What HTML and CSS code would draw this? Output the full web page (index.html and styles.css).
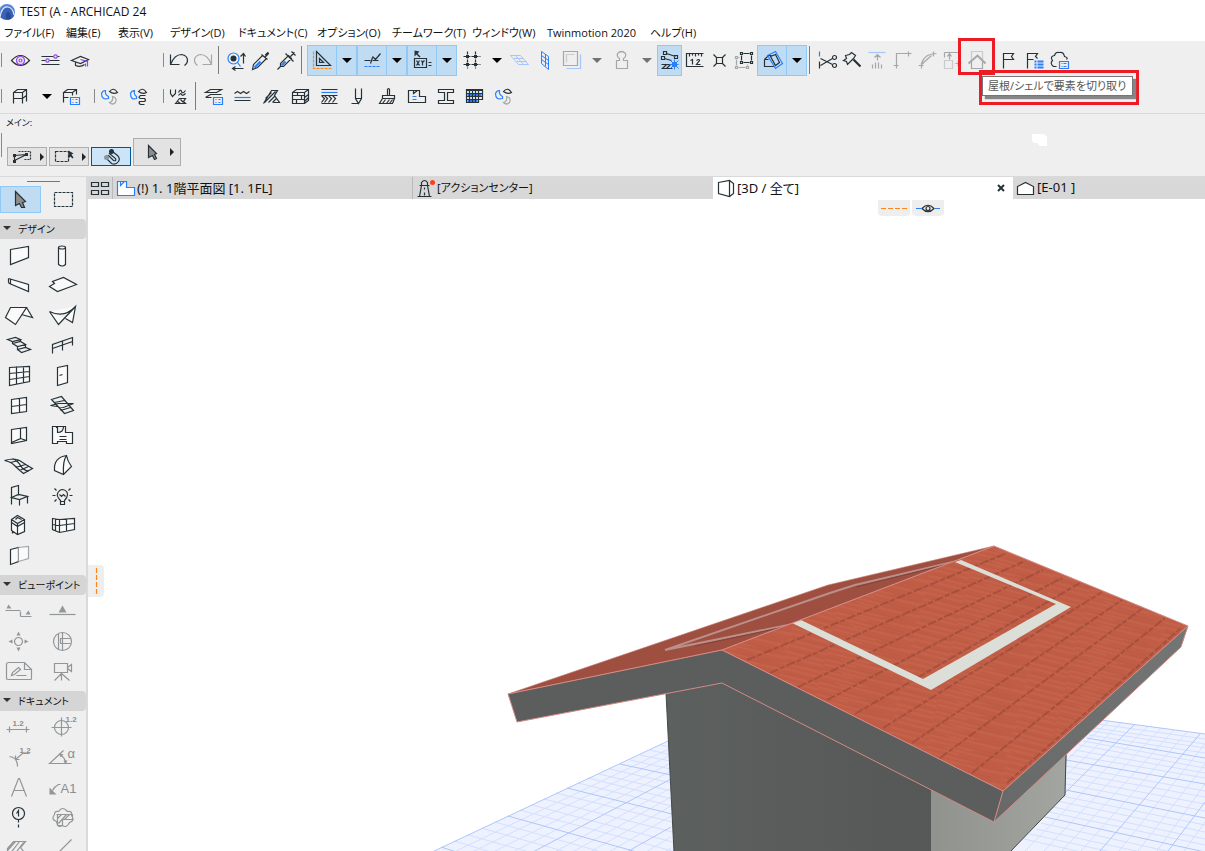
FILE: index.html
```html
<!DOCTYPE html>
<html lang="ja">
<head>
<meta charset="utf-8">
<title>TEST (A - ARCHICAD 24</title>
<link rel="stylesheet" href="styles.css">
</head>
<body>
<div class="app">
<header class="titlebar">
<svg class="logo" viewBox="0 0 16 16"><circle cx="7" cy="8" r="8" fill="#5b86d6"/><path d="M0 13Q1 3 8 3Q14 4 14 12Q11 16 7 16Q3 16 0 13z" fill="#3a62b8"/><path d="M0 13Q2 2 8 3Q13 4 14 11" fill="none" stroke="#dfe8fa" stroke-width="1.2"/><path d="M6 15Q5 8 8 8Q11 8 11 15z" fill="#284a98"/></svg>
<h1>TEST (A - ARCHICAD 24</h1>
</header>
<nav class="menubar">
<button>ファイル(F)</button><button>編集(E)</button><button>表示(V)</button><button>デザイン(D)</button><button>ドキュメント(C)</button><button>オプション(O)</button><button>チームワーク(T)</button><button>ウィンドウ(W)</button><button>Twinmotion 2020</button><button>ヘルプ(H)</button>
</nav>

<div class="toolbars">
<div class="toolbar">
<i class="grip first"></i>
<button class="w30" aria-label="表示"><svg viewBox="-11.5 -12.5 24 24"><path d="M-9 0Q0-10 9 0Q0 10-9 0z"/><g class="p"><circle r="4"/><circle r="1.5"/></g></svg></button>
<button class="w30" aria-label="調整"><svg viewBox="-11.5 -12.5 24 24"><path d="M-9-4H3M7-4H9M-9 0H-5M-1 0H9M-9 4H9"/><g class="p"><circle cx="5" cy="-4" r="1.7"/><circle cx="-3" cy="0" r="1.7"/></g></svg></button>
<button class="w30" aria-label="学習"><svg viewBox="-11.5 -12.5 24 24"><path d="M-9 0L0-4 8-1 0 3zM-5 2V5Q0 7 4 4"/><path class="p" d="M0-1L7 1V6M5 3V6"/></svg></button>
<i class="grip far"></i>
<button class="w25" aria-label="元に戻す"><svg viewBox="-11.5 -12.5 24 24"><path d="M-8-6V4H1M-8 4Q-4-6 3-6Q9-5 9 0Q9 3 6 5"/></svg></button>
<button class="w25" aria-label="やり直し"><svg class="g" viewBox="-11.5 -12.5 24 24"><path d="M8-6V4H-1M8 4Q4-6-3-6Q-9-5-9 0Q-9 3-6 5"/></svg></button>
<i class="rule"></i>
<button class="w25" aria-label="検索と選択"><svg viewBox="-11.5 -12.5 24 24"><circle class="b" cx="-3" cy="-2" r="5.5"/><path class="b" d="M1 2L4 6"/><circle class="f" cx="-3" cy="-2" r="3"/><path d="M7 3V-6M4-4L7-7 9-4M7 8H-3M-1 6L-4 8-1 10"/></svg></button>
<button class="w25" aria-label="スポイト"><svg viewBox="-11.5 -12.5 24 24"><path class="b thick" d="M-7 7L-1 1"/><path d="M-9 9L-8 4 1-5 5-2-4 7zM0-6L6-1M3-3L7-7"/><path class="thick" d="M4-5L7-8"/></svg></button>
<button class="w25" aria-label="注入"><svg viewBox="-11.5 -12.5 24 24"><path class="b thick" d="M-5 5L-1 1"/><path d="M-9 9L-6 6-6 3 2-5 5-2-3 6H-6M-1-7L7 1M4-4L8-8M5-9L9-5"/></svg></button>
<i class="rule"></i>
<span class="split"><button class="on w30" aria-label="ガイド線"><svg viewBox="-11.5 -12.5 24 24"><path class="o dash" d="M-8-9V8H10"/><path d="M-5-9V5H9zM-2-2V2H2z"/></svg></button><button class="on w20" aria-label="ガイド線メニュー"><b class="tri"></b></button></span>
<span class="split"><button class="on w30" aria-label="スナップガイド"><svg viewBox="-11.5 -12.5 24 24"><path class="b dash" d="M-7 6H9"/><path d="M-7 0H-1M-1 3L1-3M1 0H7M1-4L4-1 9-7"/></svg></button><button class="on w20" aria-label="スナップガイドメニュー"><b class="tri"></b></button></span>
<span class="split"><button class="on w30" aria-label="座標"><svg viewBox="-11.5 -12.5 24 24"><path class="f" d="M-7-10L-2-9-4-7-1-4-2-3-5-6-7-4z"/><path d="M-7-2H5V7H-7zM7 2H10M7 5H10M-5 0L-2 5M-2 0L-5 5M0 0L1 2 3 0M1 2V5"/></svg></button><button class="on w20" aria-label="座標メニュー"><b class="tri"></b></button></span>
<button class="w30" aria-label="グリッド"><svg viewBox="-11.5 -12.5 24 24"><path stroke-dasharray="3 1" d="M-8-4H9M-8 4H9M-4-9V8M4-9V8"/><path class="f" d="M-5.5-5.5h3v3h-3zM2.5-5.5h3v3h-3zM-5.5 2.5h3v3h-3zM2.5 2.5h3v3h-3z"/></svg></button>
<button class="w20" aria-label="グリッドメニュー"><b class="tri"></b></button>
<button class="w25" aria-label="編集平面"><svg class="lb thin" viewBox="-11.5 -12.5 24 24"><path d="M-9-5H1L9 4H-1zM-4-5L4 4M-6-2H4M-3 1H7"/></svg></button>
<button class="w25" aria-label="垂直平面"><svg class="b thin" viewBox="-11.5 -12.5 24 24"><path d="M-3-9L4-4V9L-3 3zM1-6V6M-3-5L4 0M-3-1L4 4"/></svg></button>
<button class="w30" aria-label="レイヤー"><svg viewBox="-11.5 -12.5 24 24"><path class="g" d="M-8-9H6V5H-8z"/><path class="g faint" d="M-5 2V-6H3"/><path class="lb" d="M9-6V8H-5"/></svg></button>
<button class="w20" aria-label="レイヤーメニュー"><b class="tri dim"></b></button>
<button class="w30" aria-label="スタンプ"><svg class="g" viewBox="-11.5 -12.5 24 24"><path d="M-5 8V0H-2V-2Q-5-4-4-7Q0-11 4-7Q5-4 2-2V0H6V8z"/></svg></button>
<button class="w20" aria-label="スタンプメニュー"><b class="tri dim"></b></button>
<button class="w25 on" aria-label="測定"><svg viewBox="-11.5 -12.5 24 24"><path d="M-3-7L6-4M-5-2L2 0M-6-9h3v3h-3zM5-5h3v3H5zM-8-4h3v3h-3zM-8 4H0M-8 8H3M-7 8L-3 4M-3 8L1 4"/><path class="b thin" d="M5-1v10M0 4h9M1 0l8 8M9 0L1 8"/><path fill="#2a7fff" stroke="none" d="M2.500 1.500h5v5h-5z"/></svg></button>
<button class="w25" aria-label="ルーラー"><svg viewBox="-11.5 -12.5 24 24"><path d="M9-7H-8V6H9M-5-7V-4M-2-7V-5M1-7V-4M4-7V-5M7-7V-4M-4 0L-2-1V4M2 0Q5-2 5 0L2 4H6"/></svg></button>
<button class="w25" aria-label="交点"><svg viewBox="-11.5 -12.5 24 24"><path d="M-6-6L-3-3M6-6L3-3M-6 6L-3 3M6 6L3 3M-3-3H3V3H-3z"/></svg></button>
<button class="w25" aria-label="グループ"><svg viewBox="-11.5 -12.5 24 24"><path class="g" d="M-8-1V5M-6 7H1M3 5V4M-5-3H-6M-9-4h2v2h-2zM-9 6h2v2h-2zM2 6h2v2H2z"/><path d="M-3-5V0M7-5V0M-1-7H5M-1 2H5M-4-8h2v2h-2zM6-8h2v2H6zM-4 1h2v2h-2zM6 1h2v2H6z"/></svg></button>
<span class="split"><button class="on w30" aria-label="平面に沿う"><svg viewBox="-11.5 -12.5 24 24"><path d="M-7-1L-3-5H0M-7-1V6H3M-7-1H-3"/><path class="b" d="M-4-5L4-9 11 3 4 8z"/><path d="M-1-4L4-6 8 2 4 5z"/></svg></button><button class="on w20" aria-label="平面メニュー"><b class="tri"></b></button></span>
<i class="rule"></i>
<button class="w25" aria-label="分割"><svg viewBox="-11.5 -12.5 24 24"><path class="b" d="M-8-9V-4"/><path d="M-8 1V8M-7-2L5 4M-7 5L5-2"/><circle cx="7" cy="-3" r="2"/><circle cx="7" cy="5" r="2"/></svg></button>
<button class="w25" aria-label="調整"><svg viewBox="-11.5 -12.5 24 24"><path d="M-7-5L-3-6-1-8 3-5 1-2-1 0-5 4 -6 1-9 0-6-2z"/><path class="thick" d="M1-1L8 6"/></svg></button>
<button class="w25" aria-label="高さ調整"><svg class="g" viewBox="-11.5 -12.5 24 24"><path class="lb" d="M-9-8H8"/><path d="M0 0V-6M-3-3L0-6 3-3M-5 4V8M-2 2V8M1 2V8M4 4V8"/></svg></button>
<button class="w25" aria-label="コーナー"><svg class="g" viewBox="-11.5 -12.5 24 24"><path d="M-6 8V-7H9M6-9V-4M-9 5H-4"/></svg></button>
<button class="w25" aria-label="フィレット"><svg class="g" viewBox="-11.5 -12.5 24 24"><path d="M-6 8V3Q-3-7 9-7M-6 4L4-5M6-9V-4M-9 5H-4"/></svg></button>
<button class="w25" aria-label="サイズ変更"><svg class="g" viewBox="-11.5 -12.5 24 24"><path d="M-8-8H6M-8-8V-3M-3-1V-6M-5-4L-3-7-1-4M3 3H8M5 1L8 3 5 5"/><path class="faint" d="M-8 0H0V8H-8z"/></svg></button>
<span class="marked"><button class="w25" aria-label="屋根/シェルで要素を切り取り" aria-describedby="tip"><svg class="g" viewBox="-11.5 -12.5 24 24"><path class="faint" d="M-6-1V-9H5V-1"/><path d="M-6 1V8H5V1"/><path stroke-width="2" d="M-9 3L0-5 8 3"/></svg></button><span class="mark-icon"></span><span class="mark-tip"><span class="tooltip" id="tip" role="tooltip">屋根/シェルで要素を切り取り</span></span></span>
<button class="w25 apart" aria-label="フラグ"><svg viewBox="-11.5 -12.5 24 24"><path d="M-4 8V-7H6L4-4 6-1H-4"/></svg></button>
<button class="w25" aria-label="フラグ一覧"><svg viewBox="-11.5 -12.5 24 24"><path d="M-7 8V-7H3L1-4 3-2M-7-1H-1"/><path class="b" stroke-width="2" d="M0 1H2M3 1H9M0 4H2M3 4H9M0 7H2M3 7H9"/></svg></button>
<button class="w25" aria-label="クラウド"><svg viewBox="-11.5 -12.5 24 24"><path d="M-3 6H-6Q-10 3-7 0Q-10-4-5-5Q-4-9 0-8Q4-9 5-4Q9-3 7-1"/><path class="b" d="M0 1H9V8H0zM2 3H3M4 3H7M2 6H3M4 6H7"/></svg></button>
</div>

<div class="toolbar second">
<i class="grip first"></i>
<button class="w29" aria-label="お気に入り"><svg viewBox="-11.5 -12.5 24 24"><path d="M-6 7V-4L-2-7H7V5M-6-4H3L7-7M3-4V7M-6 2H3L7-1"/></svg></button>
<button class="w25" aria-label="お気に入りメニュー"><b class="tri"></b></button>
<button class="w25" aria-label="お気に入り設定"><svg viewBox="-11.5 -12.5 24 24"><path d="M-8 6V-4L-4-7H5V-2M-8-4H1L5-7M1-4V-1M-8 1H-3"/><path class="b" d="M-1 1H8V8H-1zM1 3H2M4 3H6M1 6H2M4 6H6"/></svg></button>
<i class="grip near"></i>
<button class="w29" aria-label="ペンセット"><svg viewBox="-11.5 -12.5 24 24"><path class="b" d="M-1 2Q-8 4-8-3Q-7-6-4-6Q-5-2-1 0z"/><path d="M0-5Q4-10 8-4Q4-2 0-5z"/><path class="g" d="M3 0Q8 1 6 6Q3 9 0 6Q4 5 3 0z"/></svg></button>
<button class="w29" aria-label="属性"><svg viewBox="-11.5 -12.5 24 24"><path class="b" d="M-2 2Q-8 4-8-3Q-7-6-4-6Q-5-2-2 0z"/><path d="M0-5Q4-10 8-4Q4-2 0-5zM7-1H2Q-1 1 2 2H6Q8 4 6 5H1Q0 7 2 8H6"/></svg></button>
<i class="grip near2"></i>
<button class="w29" aria-label="モデル表示"><svg viewBox="-11.5 -12.5 24 24"><path d="M-8-7V-3L-6 0-3-3V-7M0-4Q2-8 3-5T7-6M0-1Q2-4 3-2T7-3M-3 7L1 2H7L5 5 7 7zM-1 5L2 7M2 3L5 6"/></svg></button>
<i class="rule"></i>
<button class="w29" aria-label="レイヤー設定"><svg viewBox="-11.5 -12.5 24 24"><path d="M-8-4L-3-7H8L3-4zM-8 1L-3-2H8M-8 1H-2"/><path class="b" d="M0 1H9V8H0zM2 3H3M5 3H7M2 6H3M5 6H7"/></svg></button>
<button class="w29" aria-label="線種"><svg viewBox="-11.5 -12.5 24 24"><path d="M-8-3L-5-5-2-3 1-5 4-3 7-5M-8 4H8"/><path class="b" d="M-8 1H8"/></svg></button>
<button class="w29" aria-label="塗りつぶし"><svg viewBox="-11.5 -12.5 24 24"><path d="M-8 7L0-6H6L3-1 8 6H2M-6 2L0-4M-7 6L4-5M-3 6L3 0M1 6L5 2"/></svg></button>
<button class="w29" aria-label="材質"><svg viewBox="-11.5 -12.5 24 24"><path d="M-8-4L-4-7H8V4L4 7H-8zM-8-4H4L8-7M4-4V7M-8-1H4M-8 3H4M-3-4V-1M1-1V3M-4 3V7M4 1L8-2M4 5L8 1"/></svg></button>
<button class="w29" aria-label="複合構造"><svg viewBox="-11.5 -12.5 24 24"><path d="M-8-7H8M-8-1H8M-8 7H8M-8-1L-5 2-8 6M-5-1L-2 2-5 6M-1-1L2 2-1 6M3-1L6 2 3 6"/><path class="b" d="M-8-4H8"/></svg></button>
<button class="w29" aria-label="ペン"><svg viewBox="-11.5 -12.5 24 24"><path d="M-3-8V2L0 7 3 2V-8M-3 2H3M-7 7H0"/></svg></button>
<button class="w29" aria-label="ブラシ"><svg viewBox="-11.5 -12.5 24 24"><path d="M-5-1H7V2H-5zM0-1V-7Q1-9 2-7V-1M-5 2L-8 7H5L7 2M-2 3L-5 7M2 3L-1 7M5 3L2 7"/></svg></button>
<button class="w29" aria-label="ゾーン"><svg viewBox="-11.5 -12.5 24 24"><path d="M-8-6H3V0H9V6H-8zM-3-6V-3L1-6"/><path class="b" d="M-4 0H0M-4 3H0"/></svg></button>
<button class="w29" aria-label="断面形状"><svg viewBox="-11.5 -12.5 24 24"><path d="M-7-7H8V-4H2V4H8V7H-7V4H-1V-4H-7z"/></svg></button>
<button class="w29" aria-label="一覧表"><svg viewBox="-11.5 -12.5 24 24"><path stroke="#2a7fff" stroke-width="3" d="M-7-2H7M-7 4H3"/><path d="M-8-6H8M-8-7H8V3H4V6H-8zM-8-3H8M-8 0H8M-8 3H4M-5-7V6M-2-7V6M1-7V6M4-7V3"/></svg></button>
<button class="w29" aria-label="表示スタイル"><svg viewBox="-11.5 -12.5 24 24"><path class="b" d="M-1 2Q-8 4-8-3Q-7-6-4-6Q-5-2-1 0z"/><path d="M0-5Q4-10 8-4Q4-2 0-5z"/><path class="g" d="M3 0Q8 1 6 6Q3 9 0 6Q4 5 3 0z"/></svg></button>
</div>
</div>

<section class="infobar">
<h2>メイン:</h2>
<div class="info-tools">
<i class="grip tall"></i>
<button class="box" aria-label="選択方法"><svg viewBox="-12.5 -9.5 24 18"><path stroke-dasharray="2 1" d="M-4-6H8V2H2"/><path d="M-8 4V-2L4-3-8 3"/><path class="f" d="M-9.500-3.500h3v3h-3zM-9.500 2.500h3v3h-3zM2.500-4.500h3v3h-3z"/></svg><b class="side"></b></button>
<button class="box" aria-label="矩形選択"><svg viewBox="-12.5 -9.5 24 18"><path stroke-dasharray="3 1" d="M-9-6H4V4H-9z"/><path class="f" d="M4-7L9-4 7-3 9 0 8 1 6-1 4 1z"/></svg><b class="side"></b></button>
<button class="box active" aria-label="磁石"><svg viewBox="-12.5 -9.5 24 18"><path d="M-6 0L0 6Q4 8 7 4Q9 1 6-2L1-6-2-4 4 1Q5 4 2 3L-3-2z"/><circle class="f" cx="0" cy="-6" r="2.500"/><circle cx="-5" cy="0" r="2.500" fill="#8d969c" stroke="none"/></svg></button>
<button class="box large" aria-label="矢印"><svg viewBox="-12.5 -12.5 24 24"><path fill="#8d8d8d" d="M-4-7L4 1 2 2 4 6 2 7 0 3-4 5z"/></svg><b class="side"></b></button>
</div>
<svg class="cloud" viewBox="0 0 15 12"><path fill="#fff" d="M0 0H12L15 3V12H8L5 9H2L0 7z"/></svg>
</section>

<div class="workspace">
<aside class="palette">
<i class="handle"></i>
<div class="select-tools">
<button class="on" aria-label="矢印"><svg viewBox="-11.5 -11.5 24 24"><path fill="#8d8d8d" d="M-5-8L5 2 2 3 4 8 1 8-1 4-5 6z"/></svg></button>
<button aria-label="矩形選択"><svg viewBox="-11.5 -11.5 24 24"><path stroke-dasharray="3 1" d="M-9-7H9V7H-9z"/></svg></button>
</div>
<h2>デザイン</h2>
<div class="tools">
<button aria-label="壁"><svg viewBox="-14.5 -14.5 30 30"><path fill="#fafafa" d="M-9-6L9-9V2L-9 9z"/></svg></button>
<button aria-label="柱"><svg viewBox="-14.5 -14.5 30 30"><path fill="#fafafa" d="M-4-8V9Q0 12 3 9V-8"/><ellipse cx="-.5" cy="-8" rx="3.500" ry="1.500"/></svg></button>
<button aria-label="梁"><svg viewBox="-14.5 -14.5 30 30"><path fill="#fafafa" d="M-11-7L9-1V6L-10-2-11-3M-11-7V-3M-9-6V-2M9-1V6"/></svg></button>
<button aria-label="スラブ"><svg viewBox="-14.5 -14.5 30 30"><path fill="#fafafa" d="M-13 1L-8-2-10-4 1-8 14-1-5 6z"/></svg></button>
<button aria-label="屋根"><svg viewBox="-14.5 -14.5 30 30"><path fill="#fafafa" d="M-14 2L-9-8H7L-4 9zM7-8L13 2 2-1"/></svg></button>
<button aria-label="シェル"><svg viewBox="-14.5 -14.5 30 30"><path fill="#fafafa" d="M-13-4Q2 3 13-9L10 7 3 3M-13-4L-4 9 13-9"/></svg></button>
<button aria-label="階段"><svg viewBox="-14.5 -14.5 30 30"><path d="M-12-6L-4-8 1-6-7-4zM-7-4V-2L1-4 6-1-2 1-7-2M-2 1V4L6 2 11 4 2 7-2 4M1-6V-4M6-1V2"/></svg></button>
<button aria-label="手摺り"><svg viewBox="-14.5 -14.5 30 30"><path d="M-10 8V-1L10-8V0M-10 3L10-4M0-4V5"/></svg></button>
<button aria-label="カーテンウォール"><svg viewBox="-14.5 -14.5 30 30"><path fill="#fafafa" d="M-10-8L10-9V6L-10 10zM-3-9V9M4-9V7M-10-2L10-4M-10 4L10 1"/></svg></button>
<button aria-label="ドア"><svg viewBox="-14.5 -14.5 30 30"><path fill="#fafafa" d="M-5-8L5-10V7L-5 10zM-3 0L0-1"/></svg></button>
<button aria-label="窓"><svg viewBox="-14.5 -14.5 30 30"><path fill="#fafafa" d="M-8-6L7-8V6L-8 8zM0-7V7M-8 1L7-1"/></svg></button>
<button aria-label="天窓"><svg viewBox="-14.5 -14.5 30 30"><path d="M-11-6L-1-9 11 5 2 8zM-8-3L2-5M-12 0L-4-2 11-2 1 2zM-2 5L8 2"/></svg></button>
<button aria-label="コーナー窓"><svg viewBox="-14.5 -14.5 30 30"><path fill="#fafafa" d="M-8-6L7-8V5L-8 8zM1-7V3L-8 7M1 3L7 5"/></svg></button>
<button aria-label="ゾーン"><svg viewBox="-14.5 -14.5 30 30"><path fill="#fafafa" d="M-10-9H-6V-8H-5V-9H3V-3H10V8H4V6H-5V8H-10zM-5-9V-3Q1-3 1-9M-3 1H4M-3 4H4"/></svg></button>
<button aria-label="モルフ"><svg viewBox="-14.5 -14.5 30 30"><path d="M-15-5Q-5-8 0-5Q6-1 13 3L4 8Q-1 4-5 0Q-9-4-15-5M-7-7Q-1-4 1 0T9 6M-4 2L6-1M-1-5L-9-3M0 5L9 1"/></svg></button>
<button aria-label="メッシュ"><svg viewBox="-14.5 -14.5 30 30"><path fill="#fafafa" d="M-8 5Q-9-8 4-10Q5-4 9 1L1 9zM4-10Q0-4 1 9"/></svg></button>
<button aria-label="オブジェクト"><svg viewBox="-14.5 -14.5 30 30"><path d="M-8 9V-8L-1-10V0M-8 2L-1-1 8 1 0 4zM0 4V10M8 1V8"/></svg></button>
<button aria-label="ランプ"><svg viewBox="-14.5 -14.5 30 30"><path d="M-2 5Q-6 1-5-2Q-3-6 0-6Q5-5 5-1Q5 2 2 5V9H-2zM-2 6H2M-3-1L-1 1 1-1 3 1M-10 0H-7M7 0H10M-8-7L-6-5M8-7L6-5M-8 6L-6 4M8 6L6 4"/></svg></button>
<button aria-label="設備"><svg viewBox="-14.5 -14.5 30 30"><path fill="#fafafa" d="M-8-6L-2-10 5-6V6L-2 9-8 5zM-8-6L-2-2 5-6M-2-2V9M-8-3L-2 1 5-3M-4-6L-2-8 2-6M-7 5V8"/></svg></button>
<button aria-label="カーテン枠"><svg viewBox="-14.5 -14.5 30 30"><path fill="#fafafa" d="M-10-7L-3-6 12-7V4L-3 7-10 4zM-3-6V7M4-7V6M-7-7V5M-10-1L-3 0 12-2"/></svg></button>
<button aria-label="開口"><svg viewBox="-14.5 -14.5 30 30"><path fill="#fafafa" d="M-9-6L-1-8V6L-9 9z"/><path class="g" fill="#fafafa" d="M-1-8L9-9V3L-1 6"/></svg></button>
</div>
<h2>ビューポイント</h2>
<div class="tools muted">
<button aria-label="断面図"><svg viewBox="-14.5 -14.5 30 30"><path d="M-14-1H1M1 0V5M1 5H12"/><path class="f" d="M-13-3L-11-7-8-3zM6 3L9-1 11 3z"/></svg></button>
<button aria-label="立面図"><svg viewBox="-14.5 -14.5 30 30"><path d="M-13 3H13"/><path class="f" d="M-4 1L0-6 4 1z"/></svg></button>
<button aria-label="展開図"><svg viewBox="-14.5 -14.5 30 30"><circle cx="-1" r="4"/><path class="f" d="M-3-6L-1-10 1-6zM-3 6L-1 10 1 6zM-7-2L-11 0-7 2zM5-2L9 0 5 2z"/></svg></button>
<button aria-label="ワークシート"><svg viewBox="-14.5 -14.5 30 30"><circle r="9"/><path d="M-4-8V8M0-9V9M8-3H-2V2H8"/></svg></button>
<button aria-label="詳細図"><svg viewBox="-14.5 -14.5 30 30"><path d="M-11-9H5L12-2V7Q12 8 11 8H-11Q-13 8-13 7V-7Q-13-9-11-9zM5-9V-2H12M-8 4L-7 1-1-4 1-2-5 3zM-3 4H7"/></svg></button>
<button aria-label="カメラ"><svg viewBox="-14.5 -14.5 30 30"><path d="M-8-8H5V1H-8zM5-4L9-7V0L5-3M-1 1V9M-1 2L-8 9M-1 2L7 9"/></svg></button>
</div>
<h2>ドキュメント</h2>
<div class="tools muted">
<button aria-label="寸法"><svg viewBox="-14.5 -14.5 30 30"><path d="M-13 2H10M-10-1V5M7-1V5"/><text x="-7" y="-2">1.2</text></svg></button>
<button aria-label="レベル寸法"><svg viewBox="-14.5 -14.5 30 30"><circle cx="-1" r="7"/><path d="M-11 0H9M-1-10V9"/><text x="3" y="-6">1.2</text></svg></button>
<button aria-label="半径寸法"><svg viewBox="-14.5 -14.5 30 30"><path d="M-10-1Q-2 0-2 9M10-4H3L-4 2M-4-2V2H0"/><text x="0" y="-5">1.2</text></svg></button>
<button aria-label="角度寸法"><svg viewBox="-14.5 -14.5 30 30"><path d="M9 6H-13L1-7M-3-3Q3 0 3 6"/><path class="f" d="M-3-4L1-3-2 0zM1 3H5L3 7z"/><text x="5" y="0" class="alpha">α</text></svg></button>
<button aria-label="テキスト"><svg viewBox="-14.5 -14.5 30 30"><path d="M-8 9L-1-9H0L7 9M-5 3H5"/></svg></button>
<button aria-label="ラベル"><svg viewBox="-14.5 -14.5 30 30"><path d="M-2-3H-4Q-8-1-10 3"/><path class="f" d="M-13 7V0L-6 7z"/><text x="-2" y="5" class="label">A1</text></svg></button>
<button class="dark" aria-label="通り芯"><svg viewBox="-14.5 -14.5 30 30"><circle cx="-1" cy="-4" r="6"/><path stroke-dasharray="3 2" d="M-1 2V10"/><path d="M-3-4L-1-7V-1"/></svg></button>
<button aria-label="変更"><svg viewBox="-14.5 -14.5 30 30"><path d="M-6 4Q-12 2-8-3Q-8-7-4-6Q0-12 5-6Q10-7 9-2Q13 3 7 5Q4 11 0 8Q-5 11-6 4zM-6-3H10V2H0V8H-5V-3M-5 1L-1-3M-4 6L4-3M2 2L7-3"/></svg></button>
<button aria-label="塗りつぶし"><svg viewBox="-14.5 -14.5 30 30"><path d="M-12 7V1L-6-6H6L1 0 8 9M-12 3L-4-6M-10 7L0-6M-5 7L4-5M0 7L3 4"/></svg></button>
<button aria-label="線"><svg viewBox="-14.5 -14.5 30 30"><path d="M9-8L-6 7"/></svg></button>
</div>
</aside>

<main class="main">
<div class="tabs" role="tablist">
<button class="overview" aria-label="タブ一覧"><svg viewBox="-12.5 -12.5 24 24"><path d="M-9-6H-2V-2H-9zM1-6H8V-2H1zM-9 2H-2V6H-9zM1 2H8V6H1z"/></svg></button>
<button class="tab" role="tab"><svg viewBox="-12.5 -12.5 24 24"><path class="b" fill="#fff" d="M-8-7H1V-1H9V7H-8z"/><path class="b" d="M-5-7V-3L-1-7"/></svg><span>(!) 1. 1階平面図 [1. 1FL]</span></button>
<button class="tab action" role="tab"><svg viewBox="-12.5 -12.5 24 24"><path d="M-8 8H6M-4-3L-6 8M2-3L4 8M-6-3H4M-4-3V-6Q-1-10 2-6V-3M-1-1V1M-1 4V7"/><circle cx="7" cy="-6" r="2.500" fill="#ff3d1a" stroke="none"/></svg><span>[アクションセンター]</span></button>
<div class="tab current" role="tab" aria-selected="true"><svg viewBox="-12.5 -12.5 24 24"><path fill="#fff" d="M-7-6L4-8 8-5V5L4 8-7 5z"/><path d="M4-8V8"/></svg><span>[3D / 全て]</span><button class="close" aria-label="閉じる"><svg viewBox="0 0 8 8"><path stroke-width="2" d="M1 1L7 7M7 1L1 7"/></svg></button></div>
<button class="tab last" role="tab"><svg viewBox="-12.5 -12.5 24 24"><path fill="#fff" d="M-8 6V-2L0-6 8-2V6z"/></svg><span>[E-01 ]</span></button>
</div>
<div class="view">
<svg class="scene" viewBox="88 199 1117 652" preserveAspectRatio="xMinYMin slice" role="img" aria-label="3D">
<defs>
<pattern id="tile" width="120" height="12" patternUnits="userSpaceOnUse" patternTransform="rotate(14)"><rect width="120" height="12" fill="#c15d46"/><path d="M0 1H50M70 3H120M16 5H82M0 8H32M80 10H120" stroke="#c8664d" stroke-width="1"/><path d="M44 2H80M0 6H20M84 7H120M30 11H70" stroke="#b95944" stroke-width="1"/></pattern>
<linearGradient id="wall" x1="0" x2="1"><stop offset="0" stop-color="#5c605f"/><stop offset=".5" stop-color="#595c5b"/><stop offset="1" stop-color="#555857"/></linearGradient>
<linearGradient id="side" x1="0" x2="1"><stop offset="0" stop-color="#8f928d"/><stop offset="1" stop-color="#a3a6a0"/></linearGradient>
<linearGradient id="eave" x1="0" y1="1" x2="1" y2="0"><stop offset="0" stop-color="#666968"/><stop offset="1" stop-color="#737674"/></linearGradient>
</defs>
<path fill="#eef2ff" d="M430 853L668 741 690 851zM1101 720L1205 734V851H1000L1060 740z"/>
<g fill="none" stroke="#d3dffe">
<path d="M454 841L680 908M468 835L680 894M481 828L680 884M495 822L680 874M520 810L680 853M532 805L680 844M544 799L680 834M556 793L680 824M578 783L680 808M588 778L680 801M599 774L680 793M610 769L680 785M630 760L680 771M640 755L680 763M650 750L680 757M660 745L680 749"/>
<path d="M671 748L431 863M671 755L431 872M671 763L431 883M671 771L431 894M671 788L431 920M671 797L431 931M671 806L431 942M671 816L431 955M671 837L431 980M671 848L431 992"/>
<path d="M1098 724L1205 739M1095 728L1205 744M1092 731L1205 748M1089 735L1205 753M1083 741L1205 763M1079 745L1205 768M1075 750L1205 773M1070 755L1205 778M1066 766L1205 791M1066 772L1205 797M1066 778L1205 804M1066 784L1205 811M1062 796L1205 825M1057 801L1205 832M1053 807L1205 839M1049 812L1205 845M1041 823L1180 854M1036 829L1150 854M1030 834L1120 854M1024 839L1090 854"/>
<path d="M1109 721L968 851M1122 722L987 851M1148 726L1025 851M1161 728L1044 851M1174 730L1062 851M1187 732L1081 851M1205 744L1119 851M1205 764L1138 851M1205 784L1157 851M1205 822L1184 851"/>
</g>
<g fill="none" stroke="#adc6fc"><path d="M430 853L668 741M441 847L500 866M508 816L680 864M567 788L680 816M620 764L680 777M671 779L531 853M671 827L625 853M1101 720L1205 734M1087 738L1205 758M1066 760L1205 784M1066 790L1205 818M1045 817L1205 852M1135 724L1006 851M1200 734L1100 851M1205 802L1168 851"/></g>
<path fill="url(#wall)" d="M666 693L722 682 931 788V852H674z"/>
<path fill="url(#side)" d="M931 788L994 820 1067 750 1065 795 1010 852H931z"/>
<path d="M666 693L674 852M1066 753L1065 795 1010 852" fill="none" stroke="#454847"/>
<path fill="#9f4f3f" stroke="#c98078" stroke-opacity=".6" d="M508 694L828 585 994 546 722 650z"/>
<g fill="none"><path stroke="#bb8f8b" stroke-width="2" d="M665 650L830 593 855 585 957 561M665 650L793 624"/><path stroke="#7d443b" d="M695 646L793 625M856 587L956 562"/></g>
<path fill="url(#tile)" d="M722 650L994 546 1188 626 1003 791z"/>
<g class="courses"><path d="M747 660L1007 553M770 673L1023 562M798 687L1043 570M827 700L1062 578M855 714L1080 583M883 728L1102 592M912 743L1122 600M940 758L1143 608M972 773L1165 618M1007 783L1182 627"/></g>
<path fill="#dcdfd8" d="M792 623L801 620 923 679 1056 604 955 562 961 560 1071 607 931 690z"/>
<path fill="#5b5e5d" d="M508 694L722 650 1003 791 994 822 722 683 517 722z"/>
<path fill="url(#eave)" d="M1188 626L1181 647 994 822 1003 791z"/>
<path fill="none" stroke="#d58985" d="M508 694L722 650 1003 791 1188 626 994 546 722 650M508 694L517 722 722 683 994 822 1181 647 1188 626M1003 791L994 822"/>
</svg>
<div class="chips"><button aria-label="切断線"><svg viewBox="0 0 32 16"><path class="o" stroke-dasharray="5 2" d="M3 8.500H30"/></svg></button><button aria-label="表示線"><svg viewBox="0 0 32 16"><path class="b" d="M4 8.500H9M23 8.500H28"/><path d="M10 8.500Q16 2 22 8.500Q16 15 10 8.500z"/><circle cx="16" cy="8.500" r="2"/></svg></button></div>
<button class="edge-chip" aria-label="切断面"><svg viewBox="0 0 16 32"><path class="o" stroke-dasharray="5 2" d="M8.500 3V30"/></svg></button>
</div>
</main>
</div>
</div>
</body>
</html>
```
FILE: styles.css
```css
* { box-sizing: border-box; }

body {
  margin: 0;
  background: #fff;
  color: #111;
  font-family: "Noto Sans", "Noto Sans CJK JP", sans-serif;
  font-size: 12px;
  font-feature-settings: "palt";
}

button {
  margin: 0;
  padding: 0;
  border: 0;
  background: none;
  color: inherit;
  font: inherit;
  font-feature-settings: inherit;
}

h1, h2 { margin: 0; font-size: 12px; font-weight: 400; }

svg { flex: none; fill: none; stroke: #263238; stroke-width: 1.2; }
.b { stroke: #2a7fff; }
.lb { stroke: #a5c6fb; }
.g { stroke: #a5a7a8; }
.p { stroke: #9443ee; }
.o { stroke: #ff851b; }
.f { fill: #263238; stroke: none; }
.thick { stroke-width: 2.2; }
.thin { stroke-width: 1; }
.faint { opacity: .5; }
.dash { stroke-dasharray: 3 1; }

.app { display: flex; flex-direction: column; height: 100vh; overflow: hidden; }

.titlebar { display: flex; align-items: center; gap: 4px; height: 23px; }
.titlebar h1 { font-family: "Open Sans", sans-serif; }
.logo { width: 16px; height: 16px; stroke: none; }

.menubar {
  display: grid;
  grid-template-columns: 62px 52px 52px 68px 79px 75px 80px 75px 103px max-content;
  height: 18px;
  padding-left: 4px;
  font-family: "Open Sans", "Noto Sans CJK JP", sans-serif;
  font-size: 11px;
  line-height: 20px;
}
.menubar button { text-align: left; white-space: nowrap; }

.toolbars { background: #efefef; border-bottom: 1px solid #d9d9d9; }
.toolbar { display: flex; align-items: center; height: 38px; }
.toolbar.second { height: 34px; }
.toolbar button { display: flex; align-items: center; justify-content: center; height: 31px; }
.toolbar svg { width: 24px; height: 24px; }
.toolbar .w20 { width: 20px; }
.toolbar .w25 { width: 25px; }
.toolbar .w29 { width: 29px; }
.toolbar .w30 { width: 30px; }
.toolbar .apart { margin: 0 2px 0 5px; }

.on { background: #c0dcf3; border: 1px solid #90c8f6; }
.split { display: flex; }
.split .on + .on { border-left-width: 0; }
.split .w30 { border-right-width: 1px; }

.grip { width: 1px; height: 14px; background: #8a8a8a; }
.grip.first { margin: 0 4px 0 1px; }
.second .grip.first { margin-right: 3px; }
.grip.far { margin: 0 2px 0 67px; }
.grip.near { margin-left: 10px; }
.grip.near2 { margin-left: 10px; }
.grip.tall { height: 24px; margin: 0 3px 9px 1px; }
.rule { width: 1px; height: 28px; margin: 0 5px 0 2px; background: #7c7c7c; }
.second .rule { margin-right: 3px; }

.tri { border: 5px solid transparent; border-top-color: #000; border-bottom: 0; }
.tri.dim { border-top-color: #737373; }

.marked { position: relative; }
.mark-icon {
  position: absolute;
  left: -7px;
  top: -7px;
  width: 37px;
  height: 37px;
  border: 3px solid #ed1c24;
}
.mark-tip {
  position: absolute;
  z-index: 2;
  left: 14px;
  top: 25px;
  padding: 3px 3px 6px 0;
  border: 3px solid #ed1c24;
}
.tooltip {
  display: block;
  padding: 0 6px 0 5px;
  border: 1px solid #767676;
  background: #fff;
  box-shadow: 3px 3px 1px #858585;
  color: #575757;
  font-size: 11px;
  line-height: 18px;
  white-space: nowrap;
}

.infobar { position: relative; height: 63px; padding-top: 1px; background: #efefef; border-bottom: 1px solid #d9d9d9; }
.infobar h2 { padding-left: 6px; font-size: 9px; line-height: 16px; }
.info-tools { display: flex; align-items: flex-end; gap: 2px; height: 35px; }
.box {
  display: flex;
  align-items: center;
  justify-content: center;
  gap: 6px;
  width: 40px;
  height: 19px;
  border: 1px solid #adadad;
  background: #e3e3e3;
}
.box svg { width: 24px; height: 18px; }
.box.active { border-color: #005499; background: #cce4f7; }
.box.large { width: 48px; height: 28px; }
.box.large svg { width: 24px; height: 24px; }
.side { border: 4px solid transparent; border-left-color: #222; border-right: 0; }
.cloud { position: absolute; left: 1032px; top: 20px; width: 15px; height: 12px; stroke: none; }

.workspace { display: flex; flex: 1; min-height: 0; }

.palette { width: 88px; flex: none; overflow: hidden; background: #efefef; border-right: 2px solid #d9d9d9; }
.handle { display: block; width: 33px; height: 1px; margin: 4px auto; background: #777; }
.select-tools { display: grid; grid-template-columns: 41px 45px; height: 29px; }
.select-tools button { display: flex; align-items: center; justify-content: center; height: 27px; }
.select-tools svg { width: 24px; height: 24px; }
.palette h2 {
  display: flex;
  align-items: center;
  gap: 7px;
  height: 20px;
  margin: 4px 0 2px;
  padding: 0 0 2px 3px;
  border-radius: 0 4px 4px 0;
  background: #d5d5d5;
  font-size: 10px;
  white-space: nowrap;
}
.palette h2::before { content: ""; border: 4px solid transparent; border-top-color: #333; border-bottom: 0; }
.tools { display: grid; grid-template-columns: 40px 46px; grid-auto-rows: 30px; }
.tools button { display: flex; align-items: center; justify-content: center; }
.tools svg { width: 30px; height: 30px; overflow: visible; }
.muted svg { stroke: #929698; }
.muted .f { fill: #929698; }
.muted .dark svg { stroke: #263238; }
.tools text { fill: #8a8e90; stroke: none; font-family: "Liberation Sans", sans-serif; font-size: 8px; font-weight: 700; }
.tools .alpha { font-size: 13px; font-weight: 400; }
.tools .label { font-size: 13px; font-weight: 400; }

.main { display: flex; flex: 1; flex-direction: column; min-width: 0; }
.tabs { display: flex; height: 22px; background: #d8d8d8; font-size: 13px; }
.tabs svg { width: 24px; height: 24px; }
.tab span { padding-bottom: 2px; }
.overview { display: flex; align-items: center; width: 25px; flex: none; border-right: 1px solid #b9b9b9; }
.tab {
  display: flex;
  align-items: center;
  width: 300px;
  flex: none;
  border-right: 1px solid #b9b9b9;
  white-space: nowrap;
}
.tab.action { border-right: 0; font-size: 11px; }
.tab.current { background: #fff; border-right: 0; }
.tab.last { width: auto; flex: 1; border-right: 0; }
.close { display: flex; margin-left: auto; padding: 8px; }
.tabs .close svg { width: 8px; height: 8px; }

.view { position: relative; flex: 1; min-height: 0; }
.scene { display: block; width: 100%; height: 100%; stroke: none; stroke-width: 1; }
.courses { stroke: #7c3a2f; stroke-width: 2; stroke-opacity: .38; stroke-dasharray: 9 2 5 2; }
.chips { position: absolute; left: 790px; top: 1px; display: flex; gap: 2px; }
.chips button { height: 16px; border-radius: 0 0 4px 4px; background: #eee; }
.chips svg { display: block; width: 32px; height: 16px; }
.edge-chip { position: absolute; left: 0; top: 366px; border-radius: 0 4px 4px 0; background: #eee; }
.edge-chip svg { display: block; width: 16px; height: 32px; }
```
